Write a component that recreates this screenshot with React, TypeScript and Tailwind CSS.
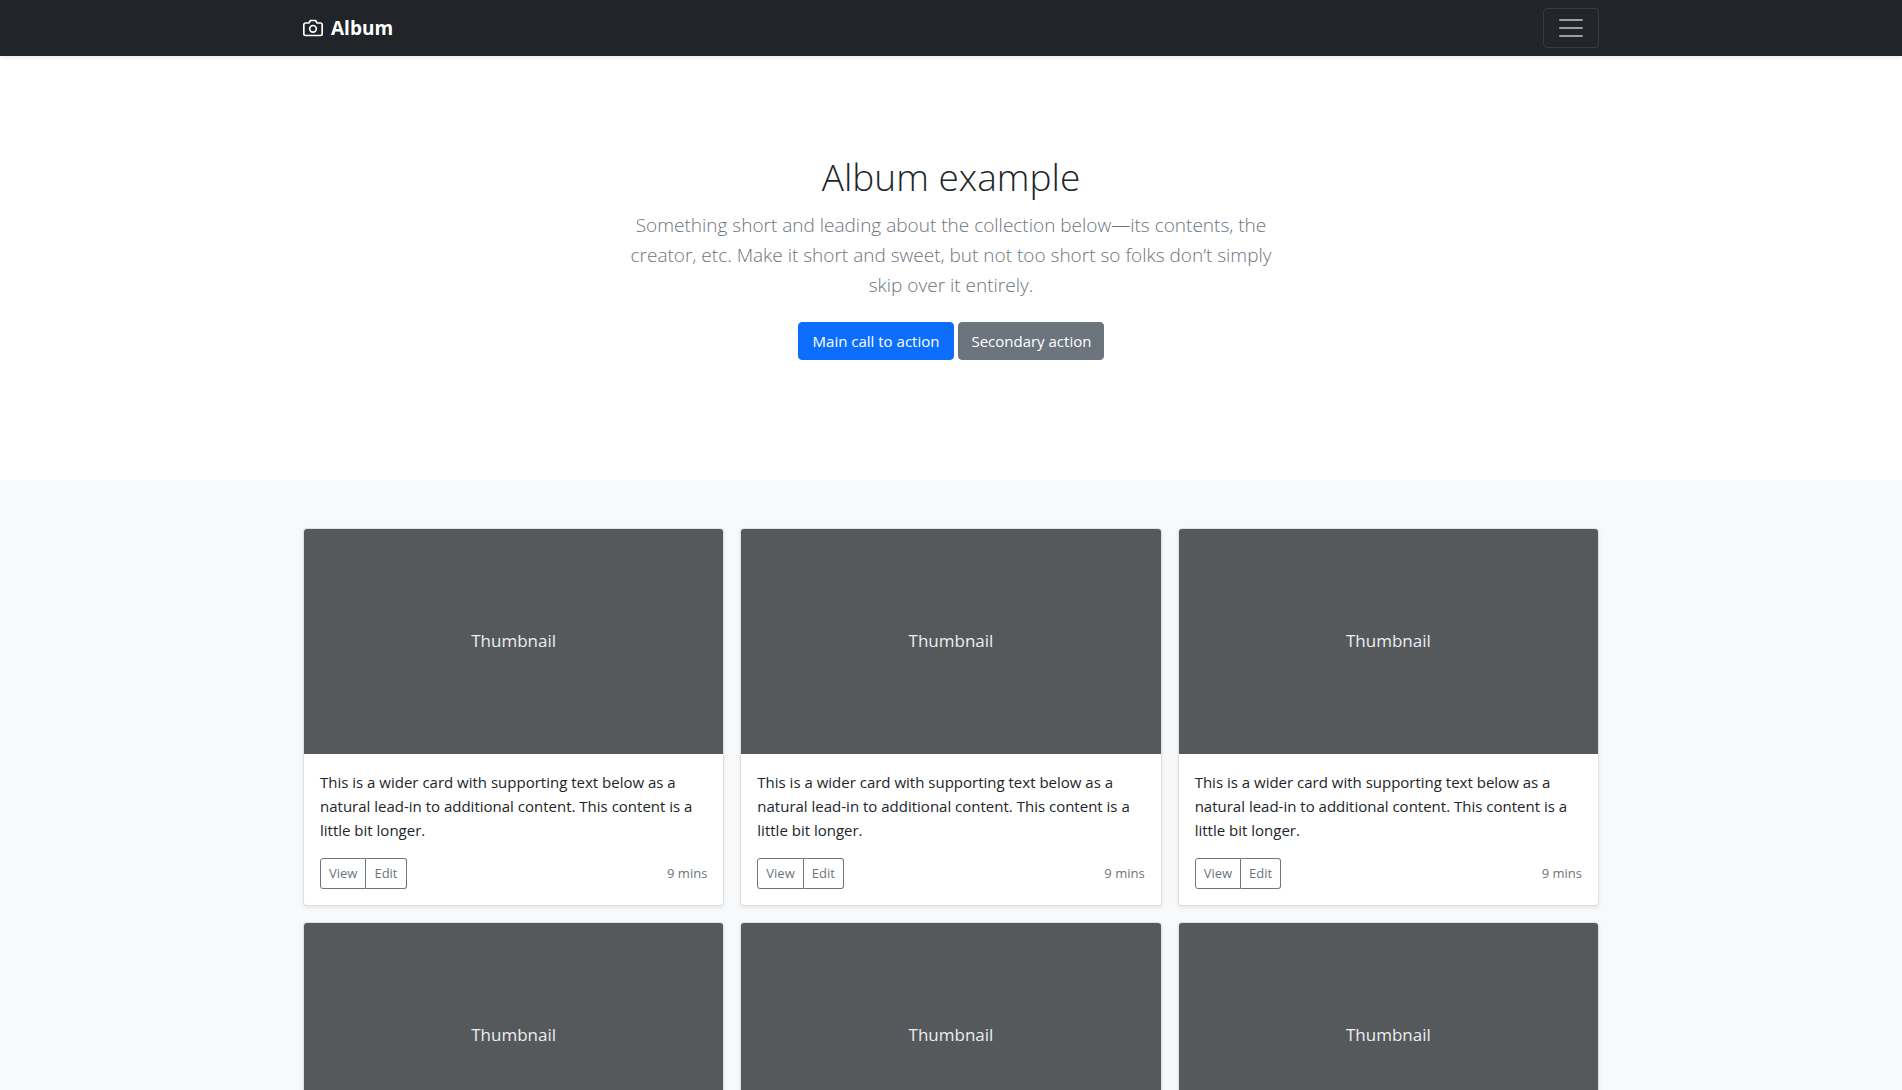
const cards = Array.from({ length: 6 }, (_, i) => i);

function CameraIcon() {
  return (
    <svg
      className="mr-2 size-5"
      viewBox="0 0 24 24"
      fill="none"
      stroke="currentColor"
      strokeWidth="2"
      strokeLinecap="round"
      strokeLinejoin="round"
      aria-hidden="true"
    >
      <path d="M23 19a2 2 0 0 1-2 2H3a2 2 0 0 1-2-2V8a2 2 0 0 1 2-2h4l2-3h6l2 3h4a2 2 0 0 1 2 2z" />
      <circle cx="12" cy="13" r="4" />
    </svg>
  );
}

function Header() {
  return (
    <header className="relative bg-[#212529] py-2 shadow-[0_2px_4px_rgba(0,0,0,0.075)]">
      <div className="mx-auto flex max-w-[1320px] items-center justify-between px-3">
        <a href="#" className="flex items-center text-[19px] leading-[30px] font-bold text-white">
          <CameraIcon />
          Album
        </a>
        <button
          type="button"
          aria-label="Toggle navigation"
          className="rounded border border-white/10 px-3 py-1 text-white/55"
        >
          <svg className="size-[30px]" viewBox="0 0 30 30" fill="none" stroke="currentColor" strokeWidth="2" strokeLinecap="round">
            <path d="M4 7h22M4 15h22M4 23h22" />
          </svg>
        </button>
      </div>
    </header>
  );
}

function Hero() {
  return (
    <section className="px-3 py-24 text-center">
      <div className="mx-auto max-w-[656px]">
        <h1 className="mb-2 text-[37px] leading-[50px] font-light">Album example</h1>
        <p className="mb-4 text-[19px] leading-[30px] font-light text-[#6c757d]">
          Something short and leading about the collection below—its contents, the creator, etc. Make it short and
          sweet, but not too short so folks don’t simply skip over it entirely.
        </p>
        <div className="flex justify-center gap-1 pt-1.5 pb-6 text-[15px] leading-6 font-medium text-white">
          <a href="#" className="rounded border border-[#0d6efd] bg-[#0d6efd] px-3.5 py-1.5">
            Main call to action
          </a>
          <a href="#" className="rounded border border-[#6c757d] bg-[#6c757d] px-3 py-1.5">
            Secondary action
          </a>
        </div>
      </div>
    </section>
  );
}

function Card() {
  return (
    <article className="overflow-hidden rounded border border-black/12 bg-white shadow-[0_2px_4px_rgba(0,0,0,0.075)]">
      <div className="flex h-[225px] items-center justify-center bg-[#55595c] pb-0.5 text-[17px] leading-6 text-[#eceeef]">
        Thumbnail
      </div>
      <div className="p-4">
        <p className="mb-4 text-[15px] leading-6">
          This is a wider card with supporting text below as a natural lead-in to additional content. This content is
          a little bit longer.
        </p>
        <div className="flex items-center justify-between text-[13px] leading-[21px] text-[#6c757d]">
          <div className="flex">
            <button type="button" className="rounded-l-[3px] border border-[#6c757d] px-2 py-1">
              View
            </button>
            <button type="button" className="rounded-r-[3px] border border-l-0 border-[#6c757d] px-2 py-1">
              Edit
            </button>
          </div>
          <small className="text-[13px]">9 mins</small>
        </div>
      </div>
    </article>
  );
}

export default function App() {
  return (
    <div className="bg-white font-['Open_Sans','Noto_Sans',sans-serif] text-[#212529]">
      <Header />
      <main>
        <Hero />
        <div className="bg-[#f8f9fa] py-12">
          <div className="mx-auto grid max-w-[1320px] grid-cols-1 gap-4 px-3 sm:grid-cols-2 md:grid-cols-3">
            {cards.map((id) => (
              <Card key={id} />
            ))}
          </div>
        </div>
      </main>
    </div>
  );
}
